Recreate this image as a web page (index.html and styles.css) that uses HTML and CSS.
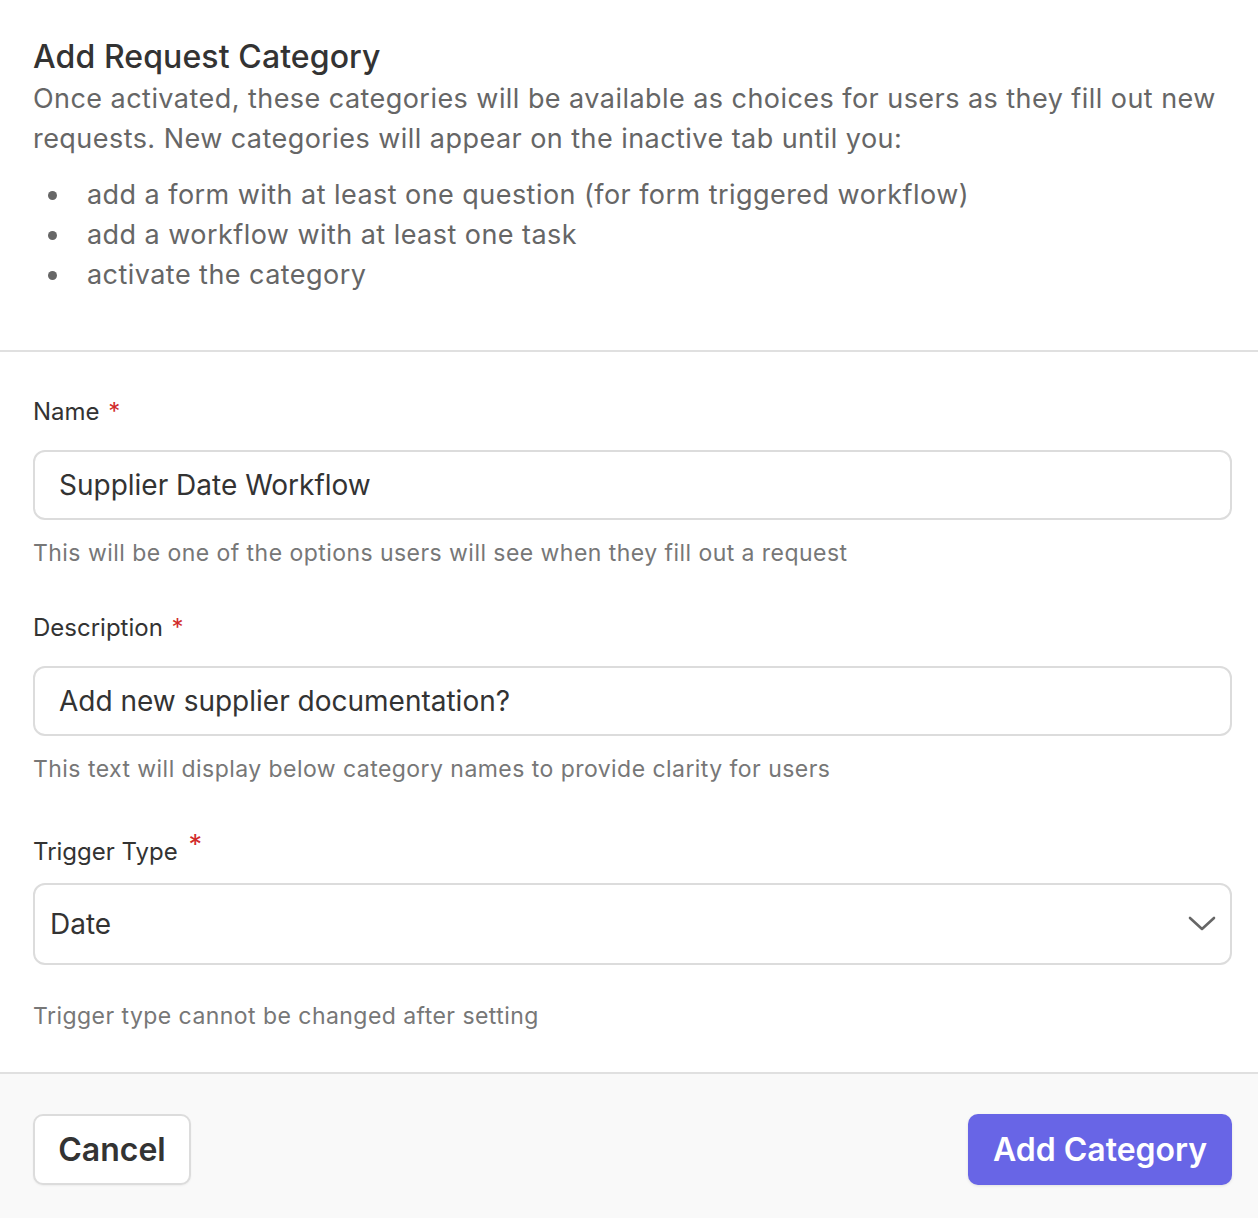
FILE: index.html
```html
<!DOCTYPE html>
<html>
<head>
<meta charset="utf-8">
<link rel="stylesheet" href="styles.css">
</head>
<body>
<div class="modal">
  <div class="header">
    <h1 class="title">Add Request Category</h1>
    <p class="intro">Once activated, these categories will be available as choices for users as they fill out new requests. New categories will appear on the inactive tab until you:</p>
    <ul class="steps">
      <li>add a form with at least one question (for form triggered workflow)</li>
      <li>add a workflow with at least one task</li>
      <li>activate the category</li>
    </ul>
  </div>
  <div class="body">
    <div class="field">
      <label class="label">Name <span class="req">*</span></label>
      <div class="input">Supplier Date Workflow</div>
      <div class="help">This will be one of the options users will see when they fill out a request</div>
    </div>
    <div class="field">
      <label class="label">Description <span class="req">*</span></label>
      <div class="input">Add new supplier documentation?</div>
      <div class="help">This text will display below category names to provide clarity for users</div>
    </div>
    <div class="field field-select">
      <label class="label">Trigger Type <span class="req req-raised">*</span></label>
      <div class="select">
        <span>Date</span>
        <svg class="chevron" width="28" height="16" viewBox="0 0 28 16"><path d="M2 2 L14 13 L26 2" fill="none" stroke="#666" stroke-width="2.6" stroke-linecap="round" stroke-linejoin="round"/></svg>
      </div>
      <div class="help help-select">Trigger type cannot be changed after setting</div>
    </div>
  </div>
  <div class="footer">
    <button class="btn btn-cancel">Cancel</button>
    <button class="btn btn-primary">Add Category</button>
  </div>
</div>
</body>
</html>
```
FILE: styles.css
```css
html, body {
  margin: 0;
  padding: 0;
  background: #fff;
}
body {
  font-family: Inter, "Noto Sans", sans-serif;
  color: #333;
}
.modal {
  width: 1258px;
  height: 1218px;
  display: flex;
  flex-direction: column;
}
.header {
  padding: 34px 33px 0 33px;
  border-bottom: 2px solid #e0e0e0;
  box-sizing: border-box;
  height: 352px;
}
.title {
  margin: 0;
  font-size: 32px;
  font-weight: 500;
  line-height: 45px;
  color: #333;
  letter-spacing: 0.1px;
}
.intro {
  margin: 0;
  font-size: 27px;
  line-height: 40px;
  color: #666;
  letter-spacing: 0.45px;
}
.steps {
  list-style: none;
  margin: 16px 0 0 0;
  padding: 0;
  font-size: 27px;
  line-height: 40px;
  color: #666;
  letter-spacing: 0.45px;
}
.steps li {
  display: flex;
  align-items: center;
}
.steps li::before {
  content: "";
  width: 9px;
  height: 9px;
  border-radius: 50%;
  background: #666;
  margin-left: 15px;
  margin-right: 30px;
  flex: none;
}
.body {
  padding: 42px 26px 0 33px;
  flex: 1;
}
.field {
  margin-bottom: 41px;
}
.label {
  display: block;
  font-size: 24px;
  line-height: 36px;
  color: #333;
  font-weight: 400;
  height: 36px;
}
.req {
  color: #d12b2b;
  margin-left: 2px;
}
.req-raised {
  position: relative;
  top: -6px;
  font-size: 27px;
  margin-left: 4px;
}
.input, .select {
  margin-top: 20px;
  height: 70px;
  box-sizing: border-box;
  border: 2px solid #dcdcdc;
  border-radius: 12px;
  font-size: 28px;
  color: #333;
  display: flex;
  align-items: center;
  padding-left: 24px;
  background: #fff;
}
.select {
  height: 82px;
  padding-left: 15px;
  padding-right: 14px;
  justify-content: space-between;
  margin-top: 14px;
}
.help {
  margin-top: 17px;
  font-size: 23px;
  line-height: 32px;
  color: #777;
  letter-spacing: 0.45px;
}
.help-select {
  margin-top: 35px;
}
.field-select {
  margin-bottom: 0;
}
.field + .field-select {
  margin-top: 48px;
}
.field:has(+ .field-select) {
  margin-bottom: 0;
}
.footer {
  height: 146px;
  box-sizing: border-box;
  border-top: 2px solid #e0e0e0;
  background: #f9f9f9;
  display: flex;
  justify-content: space-between;
  align-items: flex-start;
  padding: 40px 26px 0 33px;
}
.btn {
  font-family: Inter, "Noto Sans", sans-serif;
  font-size: 32px;
  font-weight: 600;
  height: 71px;
  border-radius: 10px;
  cursor: pointer;
  padding: 0;
}
.btn-cancel {
  width: 158px;
  background: #fff;
  color: #333;
  border: 2px solid #dcdcdc;
  box-shadow: 0 1px 2px rgba(0,0,0,0.05);
}
.btn-primary {
  width: 264px;
  background: #6865e6;
  color: #fff;
  border: none;
  box-shadow: 0 1px 3px rgba(0,0,0,0.1);
}
```
